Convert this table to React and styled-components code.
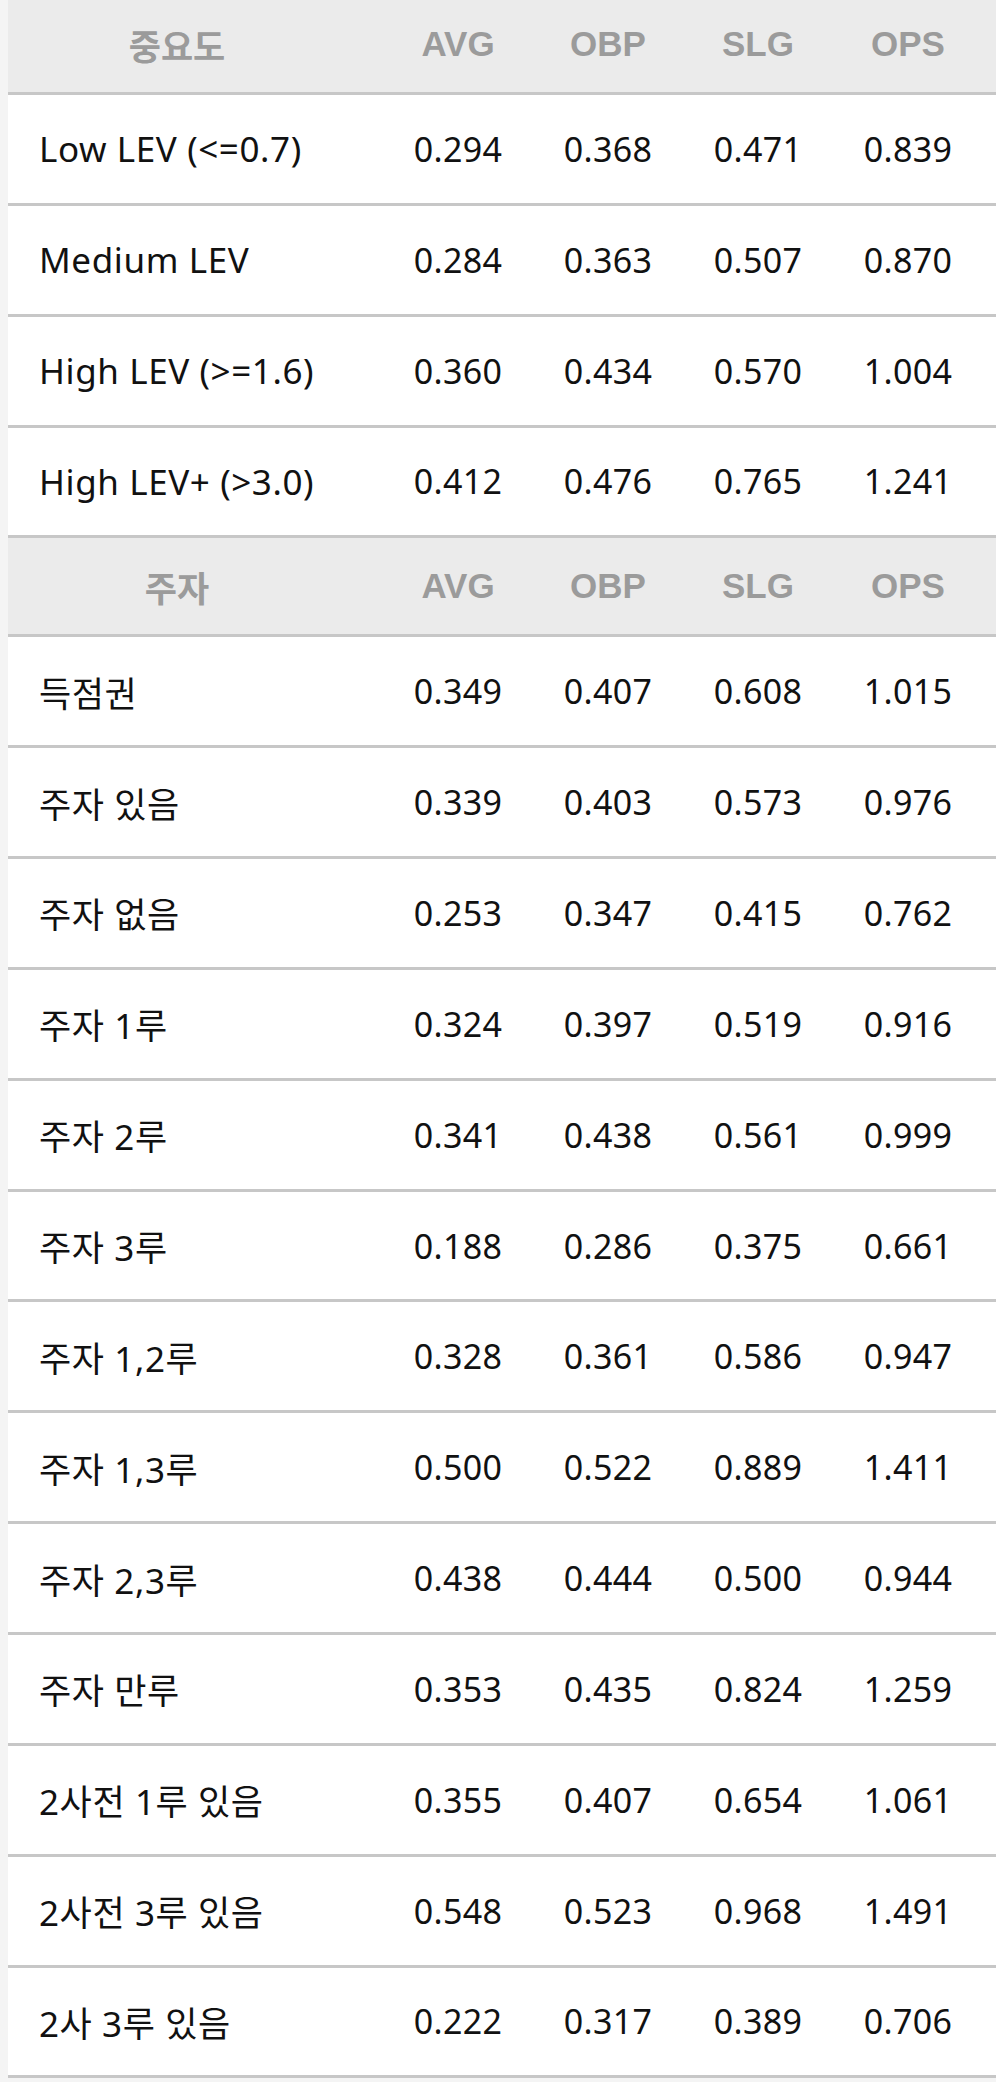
import React from 'react'
import styled, { createGlobalStyle } from 'styled-components'

const GlobalStyle = createGlobalStyle`
  html, body {
    margin: 0;
    padding: 0;
    background: #f4f4f4;
  }
`

const Table = styled.div`
  margin: -4px 0 0 8px;
  background: #ffffff;
`

const Row = styled.div`
  display: grid;
  grid-template-columns: 375px repeat(4, 150px) 1fr;
  align-items: center;
  height: ${props => (props.head ? '96px' : '107.85px')};
  background: ${props => (props.head ? '#ebebeb' : '#ffffff')};
  border-bottom: 3px solid #c7c7c7;
`

const HeadCell = styled.div`
  text-align: center;
  font-family: 'Liberation Sans', 'Noto Sans CJK KR', sans-serif;
  font-weight: 700;
  font-size: 35px;
  color: #9b9b9b;
  padding-right: ${props => (props.label ? '37px' : '0')};
`

const LabelCell = styled.div`
  padding-left: 31px;
  font-family: 'Noto Sans', 'Noto Sans CJK KR', sans-serif;
  font-size: 35px;
  letter-spacing: 0.6px;
  color: #111111;
  white-space: nowrap;
`

const NumCell = styled.div`
  text-align: center;
  font-family: 'Noto Sans', 'Noto Sans CJK KR', sans-serif;
  font-size: 34px;
  letter-spacing: 0.3px;
  color: #111111;
`

const sections = [
  {
    title: '중요도',
    rows: [
      ['Low LEV (<=0.7)', '0.294', '0.368', '0.471', '0.839'],
      ['Medium LEV', '0.284', '0.363', '0.507', '0.870'],
      ['High LEV (>=1.6)', '0.360', '0.434', '0.570', '1.004'],
      ['High LEV+ (>3.0)', '0.412', '0.476', '0.765', '1.241']
    ]
  },
  {
    title: '주자',
    rows: [
      ['득점권', '0.349', '0.407', '0.608', '1.015'],
      ['주자 있음', '0.339', '0.403', '0.573', '0.976'],
      ['주자 없음', '0.253', '0.347', '0.415', '0.762'],
      ['주자 1루', '0.324', '0.397', '0.519', '0.916'],
      ['주자 2루', '0.341', '0.438', '0.561', '0.999'],
      ['주자 3루', '0.188', '0.286', '0.375', '0.661'],
      ['주자 1,2루', '0.328', '0.361', '0.586', '0.947'],
      ['주자 1,3루', '0.500', '0.522', '0.889', '1.411'],
      ['주자 2,3루', '0.438', '0.444', '0.500', '0.944'],
      ['주자 만루', '0.353', '0.435', '0.824', '1.259'],
      ['2사전 1루 있음', '0.355', '0.407', '0.654', '1.061'],
      ['2사전 3루 있음', '0.548', '0.523', '0.968', '1.491'],
      ['2사 3루 있음', '0.222', '0.317', '0.389', '0.706']
    ]
  }
]

const stats = ['AVG', 'OBP', 'SLG', 'OPS']

const App = () => (
  <>
    <GlobalStyle />
    <Table>
      {sections.map(section => (
        <React.Fragment key={section.title}>
          <Row head>
            <HeadCell label>{section.title}</HeadCell>
            {stats.map(s => (
              <HeadCell key={s}>{s}</HeadCell>
            ))}
          </Row>
          {section.rows.map(([label, ...values]) => (
            <Row key={label}>
              <LabelCell>{label}</LabelCell>
              {values.map((v, i) => (
                <NumCell key={i}>{v}</NumCell>
              ))}
            </Row>
          ))}
        </React.Fragment>
      ))}
    </Table>
  </>
)

export default App
